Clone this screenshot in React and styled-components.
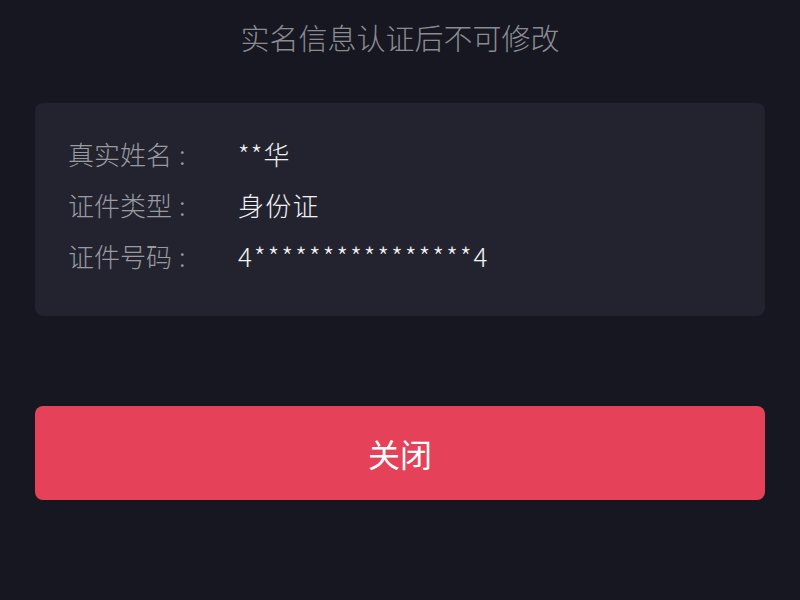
import React from "react";
import styled, { createGlobalStyle } from "styled-components";

const Global = createGlobalStyle`
  html, body { margin: 0; padding: 0; background: #161720; }
  body { font-family: "Noto Sans CJK SC", "Noto Sans", sans-serif; }
`;

const Page = styled.div`
  width: 800px;
  height: 600px;
  box-sizing: border-box;
  padding: 0 35px;
  display: flex;
  flex-direction: column;
  background: #161720;
`;

const Title = styled.div`
  height: 74px;
  line-height: 74px;
  text-align: center;
  font-size: 29px;
  font-weight: 300;
  color: #8b8c93;
  margin-bottom: 29px;
`;

const Card = styled.div`
  height: 213px;
  box-sizing: border-box;
  background: #22232e;
  border-radius: 8px;
  padding: 25px 33px 0;
  display: flex;
  flex-direction: column;
`;

const Row = styled.div`
  display: flex;
  align-items: center;
  height: 51px;
`;

const Label = styled.span`
  width: 170px;
  font-size: 26px;
  font-weight: 300;
  color: #9a9ba1;
`;

const Colon = styled.span`
  margin-left: 7px;
`;

const Value = styled.span`
  font-size: 26px;
  font-weight: 300;
  letter-spacing: ${(p) => (p.$wide ? "2.2px" : "1.2px")};
  color: #f2f2f4;
`;

const Button = styled.button`
  margin-top: 90px;
  height: 94px;
  border: none;
  border-radius: 8px;
  background: #e5425a;
  color: #ffffff;
  font-family: inherit;
  font-size: 32px;
  font-weight: 400;
  cursor: pointer;
`;

const rows = [
  ["真实姓名", "**华", false],
  ["证件类型", "身份证", false],
  ["证件号码", "4****************4", true],
];

export default function App() {
  return (
    <>
      <Global />
      <Page>
        <Title>实名信息认证后不可修改</Title>
        <Card>
          {rows.map(([l, v, wide]) => (
            <Row key={l}>
              <Label>
                {l}
                <Colon>:</Colon>
              </Label>
              <Value $wide={wide}>{v}</Value>
            </Row>
          ))}
        </Card>
        <Button>关闭</Button>
      </Page>
    </>
  );
}
